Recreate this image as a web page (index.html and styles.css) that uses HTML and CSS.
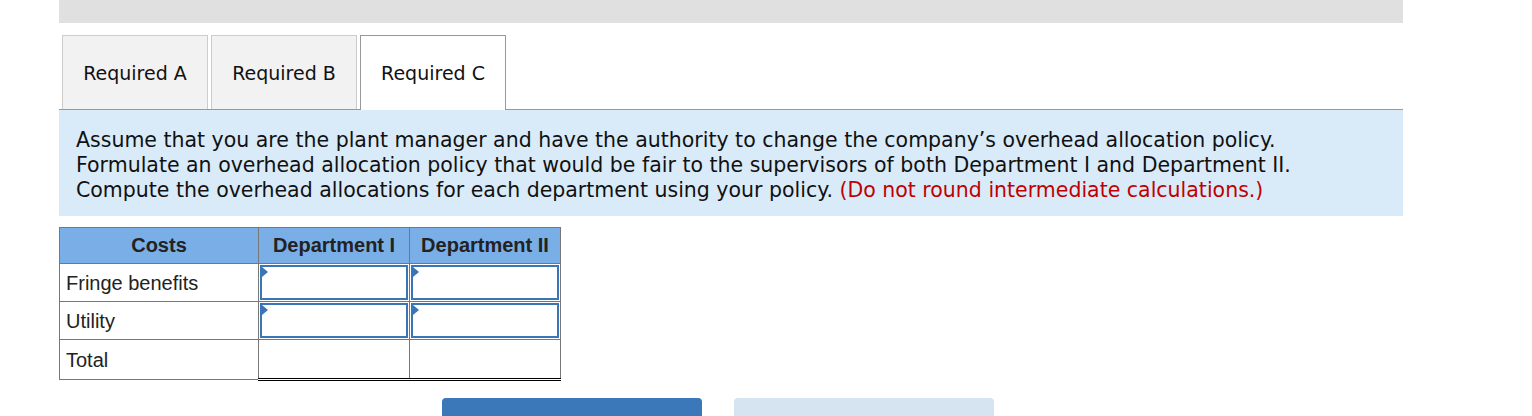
FILE: index.html
```html
<!DOCTYPE html>
<html lang="en">
<head>
  <meta charset="UTF-8" />
  <title>Required C</title>
  <link rel="stylesheet" href="styles.css">
</head>
<body>
  <div class="page">
    <div class="topbar"></div>

    <div class="tabs">
      <div class="tab">Required A</div>
      <div class="tab">Required B</div>
      <div class="tab active">Required C</div>
    </div>

    <div class="question">
      Assume that you are the plant manager and have the authority to change the company’s overhead allocation policy.<br>
      Formulate an overhead allocation policy that would be fair to the supervisors of both Department I and Department II.<br>
      Compute the overhead allocations for each department using your policy. <span class="note">(Do not round intermediate calculations.)</span>
    </div>

    <table class="grid">
      <thead>
        <tr>
          <th class="col-label">Costs</th>
          <th class="col-val">Department I</th>
          <th class="col-val">Department II</th>
        </tr>
      </thead>
      <tbody>
        <tr>
          <td class="label">Fringe benefits</td>
          <td class="entry"><div class="box"></div></td>
          <td class="entry"><div class="box"></div></td>
        </tr>
        <tr>
          <td class="label">Utility</td>
          <td class="entry"><div class="box"></div></td>
          <td class="entry"><div class="box"></div></td>
        </tr>
        <tr class="total">
          <td class="label">Total</td>
          <td class="sum"></td>
          <td class="sum"></td>
        </tr>
      </tbody>
    </table>

    <div class="nav">
      <button class="btn prev">&lt; Required B</button>
      <button class="btn next">Required C &gt;</button>
    </div>
  </div>
</body>
</html>
```

FILE: styles.css
```css
body {
  margin: 0;
  background: #fff;
  color: #000;
  font-family: "DejaVu Sans", Verdana, sans-serif;
}
.page {
  width: 1344px;
  margin-left: 59px;
}
.topbar {
  height: 23px;
  background: #e0e0e0;
}
.tabs {
  display: flex;
  gap: 3px;
  margin-top: 12px;
  padding-left: 3px;
  border-bottom: 1px solid #999;
  height: 74px;
}
.tab {
  width: 144px;
  height: 73px;
  border: 1px solid #ccc;
  border-bottom: none;
  background: #f2f2f2;
  display: flex;
  align-items: center;
  justify-content: center;
  font-size: 19px;
  color: #111;
}
.tab.active {
  background: #fff;
  border-color: #999;
  height: 74px;
  margin-bottom: -1px;
}
.question {
  background: #d9ebf9;
  padding: 18px 17px 13px;
  font-size: 20.5px;
  line-height: 25px;
  color: #111;
}
.note {
  color: #c00000;
}
.grid {
  margin-top: 11px;
  border-collapse: collapse;
  font-family: "Liberation Sans", Arial, sans-serif;
  font-size: 20px;
  color: #222;
}
.grid th {
  background: #7aaee6;
  height: 35px;
  padding: 0;
  border: 1px solid #777;
  font-weight: bold;
  text-align: center;
}
.col-label {
  width: 198px;
}
.col-val {
  width: 150px;
}
.grid td {
  border: 1px solid #777;
  padding: 0;
  line-height: 22px;
}
.grid td.label {
  padding-left: 6px;
  text-align: left;
}
.grid td.entry {
  padding: 1px;
}
.box {
  position: relative;
  height: 31px;
  border: 2px solid #3a75b8;
  background: #fff;
}
.box::before {
  content: "";
  position: absolute;
  left: 0;
  top: 0;
  border-left: 6px solid #3a75b8;
  border-top: 5px solid transparent;
  border-bottom: 5px solid transparent;
}
.total td {
  height: 38px;
}
.total td.sum {
  border-top: 1px solid #000;
  border-bottom: 3px double #000;
}
.nav {
  display: flex;
  gap: 32px;
  margin-top: 17px;
  padding-left: 383px;
}
.btn {
  width: 260px;
  height: 44px;
  border: none;
  border-radius: 4px;
  font-family: "DejaVu Sans", Verdana, sans-serif;
  font-size: 18px;
  font-weight: bold;
  color: #fff;
  padding-top: 16px;
}
.prev {
  background: #3a78ba;
}
.next {
  background: #d6e3f1;
}
```
